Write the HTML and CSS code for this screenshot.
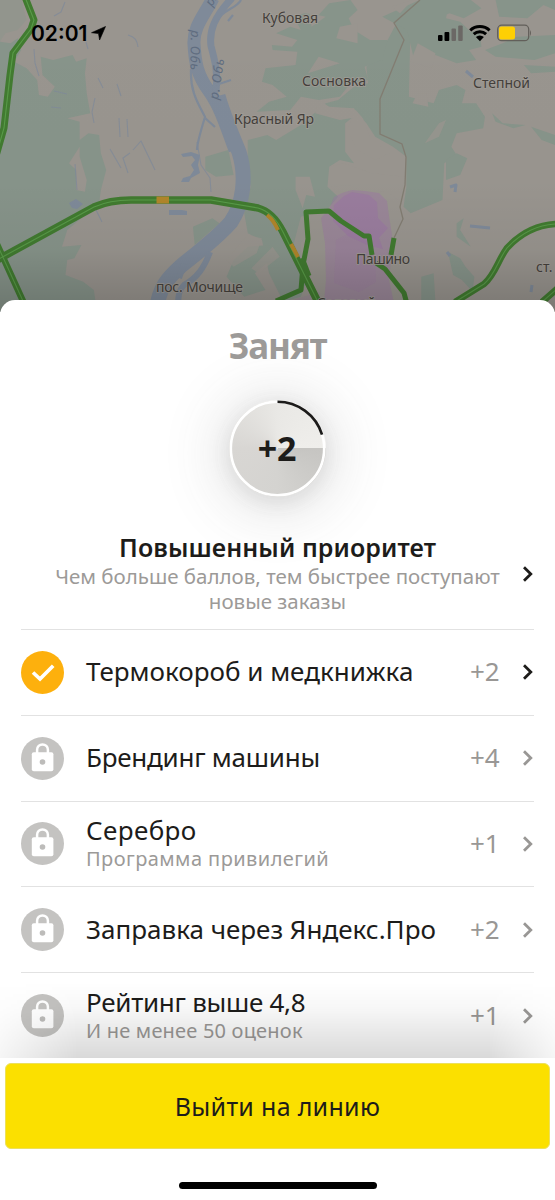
FILE: index.html
```html
<!DOCTYPE html>
<html lang="ru">
<head>
<meta charset="utf-8">
<title>Приоритет</title>
<link rel="stylesheet" href="styles.css">
</head>
<body>
<svg class="symbols" width="0" height="0">
  <symbol id="chevron" viewBox="0 0 12 18"><path d="M2 2.2 8.8 9 2 15.8" fill="none" stroke="currentColor" stroke-width="2.8"/></symbol>
  <symbol id="lock" viewBox="0 0 43 43">
    <circle cx="21.5" cy="21.5" r="21.5" fill="#c4c3c1"/>
    <path d="M16.1 18v-5.2a5.4 5.4 0 0 1 10.8 0V18" fill="none" stroke="#fff" stroke-width="2.5"/>
    <rect x="10.8" y="15.3" width="21.6" height="19" rx="2" fill="#fff"/>
    <circle cx="21.5" cy="25" r="2.8" fill="#bdbcba"/>
  </symbol>
</svg>
<div class="screen">
  <header class="map">
    <svg class="map-canvas" width="555" height="312" viewBox="0 0 555 312">
      <defs><linearGradient id="shade" x1="0" y1="0" x2="0" y2="1"><stop offset="0" stop-color="#000" stop-opacity="0"/><stop offset=".6" stop-color="#000" stop-opacity=".01"/><stop offset=".8" stop-color="#000" stop-opacity=".05"/><stop offset="1" stop-color="#000" stop-opacity=".2"/></linearGradient></defs>
      <rect width="555" height="312" fill="#99958f"/>
      <g fill="#87948a" transform="scale(.354 .3333)">
        <path d="M0 125 30 130 50 115 60 150 40 185 75 205 105 240 110 285 135 290 155 260 120 225 115 170 150 180 205 165 215 185 245 175 240 220 245 280 255 340 190 355 225 365 225 440 195 490 215 510 215 570 240 575 245 540 225 470 225 420 250 400 280 405 285 460 300 510 285 570 280 610 190 690 175 740 230 735 210 775 190 780 185 825 235 845 265 870 275 940 0 940Z"/>
        <path d="M0 0 60 0 75 60 50 90 15 100 0 125Z" opacity=".35"/>
        <path d="M700 420 755 405 780 420 850 375 920 310 955 300 1000 260 1040 250 1035 200 1080 150 1110 90 1130 50 1160 60 1155 290 1190 300 1225 310 1240 270 1290 255 1315 270 1305 310 1345 310 1370 350 1365 385 1290 400 1275 440 1290 465 1255 490 1250 600 1160 640 1140 620 1148 560 1148 470 1110 440 1060 410 1035 370 1010 340 975 370 975 455 1000 490 960 480 930 500 925 560 955 590 915 640 870 640 875 700 850 730 850 760 870 830 850 890 800 905 760 820 740 720 700 700 690 640 708 560 700 510Z"/>
        <path d="M820 80 850 90 830 50 860 40 900 45 930 10 990 0 1010 30 985 55 1000 90 1045 120 1095 120 1080 180 1030 200 1040 240 990 250 960 290 900 300 850 290 820 330 725 335 760 305 810 290 770 255 740 245 750 205 835 195 840 155 770 150 768 135 825 140 840 120 780 100Z"/>
        <path d="M1080 50 1185 0 1270 0 1260 55 1300 65 1330 95 1355 90 1360 140 1325 150 1345 180 1290 190 1230 165 1170 180 1150 90ZM1225 60 1210 0 1330 0 1360 25 1310 55 1270 40ZM1400 0 1568 0 1568 30 1535 15 1490 55 1410 50ZM1420 130 1460 110 1568 105 1568 160 1510 180 1400 170 1370 150ZM1480 195 1568 200 1568 215 1500 220ZM1500 380 1568 405 1568 435 1530 420ZM1390 340 1420 370 1485 375 1450 385 1400 365Z"/>
        <path d="M1260 480 1290 460 1320 475 1300 525 1260 540ZM1265 755 1300 775 1315 800 1340 830 1335 875 1305 840 1280 825ZM1290 670 1310 655 1300 690 1330 740 1290 710ZM1190 830 1225 820 1230 905 1190 910ZM580 470 645 450 660 525 610 530 580 510ZM545 680 600 655 620 670 550 735ZM660 780 700 740 760 735 775 770 720 820 750 870 690 890 640 830Z"/>
      </g>
      <g fill="#99958f" transform="scale(.354 .3333)">
        <path d="M835 530 875 530 890 590 865 585 855 625 835 570ZM1005 330 1025 355 1045 410 1100 460 1060 480 1010 450 980 390ZM935 500 970 490 1050 520 1145 530 1125 600 1090 570 1040 590 990 555 935 560ZM900 300 930 320 1000 325 1015 350 960 360 890 340ZM1180 130 1230 160 1220 205 1160 185ZM1180 280 1205 280 1210 320 1165 310ZM1105 20 1120 15 1165 0 1130 40ZM875 40 920 50 880 80ZM960 80 1010 70 1010 130 950 115ZM900 170 960 190 870 220Z"/>
        <path d="M1240 370 1260 360 1240 410 1200 430ZM880 640 870 760 850 780 830 730 850 650ZM700 705 740 715 725 760 660 800 640 780ZM770 740 790 770 730 820 710 805Z" opacity=".75"/>
      </g>
      <g class="water" fill="none" stroke="#7f8a99" stroke-linejoin="round">
        <path stroke-width="13" d="M213 -2C204 16 193 27 194 44 195 62 197 75 209 91 219 105 225 122 235 150"/>
        <path stroke-width="7" d="M232 -2C214 17 209 31 211 46 215 62 218 70 216 92"/>
        <path stroke-width="15" d="M218 96C223 114 230 130 239 152 247 177 243 204 231 222 217 238 196 254 181 266 169 277 159 286 156 312"/>
        <path stroke-width="6" d="M210 252C204 268 197 278 184 285 176 293 180 300 176 312M179 278 184 264"/>
        <path stroke-width="2.2" d="M191 69C190 92 198 103 205 117 201 130 197 143 197 150M205 118 215 127M216 85 231 80M215 22C225 8 236 9 241 0M228 21 233 15"/>
        <path stroke-width="1.1" opacity=".75" d="M54 16 61 12 65 2M128 35C135 37 137 40 138 47M34 49 35 63 39 76M98 78 103 88M117 84 121 96M95 98 92 112 94 123M119 118 120 137M127 119 128 137M133 150 141 141 155 170M54 91 67 94M51 107 61 108M86 42 88 49M75 164 77 190M110 149 121 168M128 173 123 158 130 153M96 210 102 222M197 142 201 165 210 178 211 192"/>
        <path fill="#7f8a99" stroke="none" d="m181 154 10-2 9 3-2 10 2 8-9 5-2 4-8 0 2-4 7-2 4-6-3-5 4-5-3-4-9 1ZM169 210h13l5 1v4h-18ZM69 203l7-4 7 5-6 5-5-1Z"/>
        <path stroke-width="3" d="M466 71 473 77M470 226 490 228M450 187 456 185 455 192M447 252 450 256M532 285 531 292"/>
      </g>
      <g fill="#9a74a4">
        <path opacity=".4" d="M321 218 330 207 334 197 342 193 352 190 365 191 379 193 387 201 389 216 392 235 391 261 389 280 396 312 323 312 326 280 325 243Z"/>
        <path opacity=".5" d="M334 205 344 196 352 192 369 195 377 202 378 218 388 228 379 238 383 249 370 246 348 236 333 221Z"/>
        <path opacity=".2" d="M336 240 356 230 375 254 376 282 359 292 334 283ZM285 302 320 292 320 312 285 312Z"/>
      </g>
      <path d="M420 0 394 23 404 40 380 99 380 134 402 144 406 157 405 185 400 207 403 219 394 238" fill="none" stroke="#827d72" stroke-width="1.3"/>
      <g class="roads" fill="none" stroke="#417b30" stroke-linejoin="round">
        <path stroke-width="7" d="M25 -3 34 20 31 29 13 53 10 75 4 128-4 156"/>
        <path stroke-width="7.5" d="M-3 260 94 207C105 202 117 200 131 200L211 200 258 208C269 211 277 220 283 232L319 304"/>
        <path stroke-width="6.5" d="M-4 242 28 312M455 302 484 284C495 275 498 260 507 248 520 234 536 225 556 224M542 302 558 288"/>
        <path stroke-width="5" d="M276 301 301 290 303 265 308 239 306 212 329 211 341 221 364 236 369 236 372 255M376 263 385 269 404 293 407 304M391 255 394 238M302 258 309 276"/>
      </g>
      <path d="M25 -3 34 20 31 29 13 53 10 75 4 128-4 156M-3 260 94 207C105 202 117 200 131 200L211 200 258 208C269 211 277 220 283 232L319 304M-4 242 28 312M455 302 484 284C495 275 498 260 507 248 520 234 536 225 556 224M542 302 558 288" fill="none" stroke="#599b49" stroke-width="1.1"/>
      <path d="M156.5 200H169" fill="none" stroke="#b1862a" stroke-width="7"/>
      <path d="M267 215C271 218 275 223 278 230M291 244 298 257" fill="none" stroke="#b1862a" stroke-width="4"/>
      <g class="river-names"><text transform="translate(191 30) rotate(91)" textLength="40">р. Обь</text><text transform="translate(218 100) rotate(-81)" textLength="41">р. Обь</text><text transform="translate(212 7) rotate(-60)">р. Обь</text></g>
      <g class="places">
        <text x="262" y="23" textLength="56">Кубовая</text><text x="302" y="86" textLength="64">Сосновка</text>
        <text x="473" y="88" textLength="57">Степной</text><text x="234" y="124" textLength="80">Красный Яр</text>
        <text x="356" y="264" textLength="54">Пашино</text><text x="156" y="292" textLength="87">пос. Мочище</text>
        <text x="536" y="272">ст.</text><text x="317" y="308" textLength="59">Садовый</text>
      </g>
      <rect width="555" height="312" fill="url(#shade)"/>
    </svg>
    <div class="status">
      <span class="time">02:01</span>
      <svg class="location" width="15" height="15" viewBox="0 0 15 15"><path d="M14.5.5 8.6 14 7.5 7.6.5 6.7Z" stroke="#000" stroke-width=".6"/></svg>
      <svg class="indicators" width="94" height="20" viewBox="0 0 94 20">
        <rect x="1" y="12" width="4.5" height="6" rx="1"/><rect x="7.5" y="9" width="4.8" height="9" rx="1"/>
        <g fill="#6b6865"><rect x="14.5" y="5.5" width="4.5" height="12.5" rx="1"/><rect x="21.2" y="2.5" width="4.5" height="15.5" rx="1"/></g>
        <g fill="none" stroke="#000" stroke-width="3"><path d="M33.2 7.3a14.5 14.5 0 0 1 19.4 0M36.7 11.1a9.2 9.2 0 0 1 12.4 0"/></g>
        <path d="M38.9 14.1a6 6 0 0 1 8 0L42.9 18.2Z"/>
        <rect x="60.7" y="2.2" width="31" height="15.5" rx="4" fill="none" stroke="#625f5a" stroke-width="1.3"/>
        <rect x="62" y="3.5" width="16" height="13" rx="2.5" fill="#fecf04"/><path d="M93 7q2 3 0 6Z" fill="#625f5a"/>
      </svg>
    </div>
  </header>
  <main class="sheet">
    <h1>Занят</h1>
    <div class="score">
      <svg class="ring" width="97" height="97" viewBox="0 0 98 98">
        <circle cx="49" cy="49" r="47.2"/><path d="M49 1.8A47.2 47.2 0 0 1 94 35"/>
      </svg>
      <span>+2</span>
    </div>
    <section class="priority">
      <div class="priority-text"><h2>Повышенный приоритет</h2><p>Чем больше баллов, тем быстрее поступают<br>новые заказы</p></div>
      <svg class="chevron"><use href="#chevron"/></svg>
    </section>
    <ul class="list">
      <li><svg class="badge" viewBox="0 0 43 43"><circle cx="21.5" cy="21.5" r="21.5" fill="#fdb00d"/><path d="M12 21.5 19 28 32.2 14.8" fill="none" stroke="#fff" stroke-width="3.7"/></svg><div class="label"><b class="t1">Термокороб и медкнижка</b></div><span class="points">+2</span><svg class="chevron"><use href="#chevron"/></svg></li>
      <li class="locked"><svg class="badge"><use href="#lock"/></svg><div class="label"><b class="t2">Брендинг машины</b></div><span class="points">+4</span><svg class="chevron"><use href="#chevron"/></svg></li>
      <li class="locked"><svg class="badge"><use href="#lock"/></svg><div class="label double"><b class="t3">Серебро</b><small class="s3">Программа привилегий</small></div><span class="points">+1</span><svg class="chevron"><use href="#chevron"/></svg></li>
      <li class="locked"><svg class="badge"><use href="#lock"/></svg><div class="label"><b class="t4">Заправка через Яндекс.Про</b></div><span class="points">+2</span><svg class="chevron"><use href="#chevron"/></svg></li>
      <li class="locked"><svg class="badge"><use href="#lock"/></svg><div class="label double"><b class="t5">Рейтинг выше 4,8</b><small class="s5">И не менее 50 оценок</small></div><span class="points">+1</span><svg class="chevron"><use href="#chevron"/></svg></li>
    </ul>
  </main>
  <footer class="footer"><button>Выйти на линию</button><div class="home"></div></footer>
</div>
</body>
</html>
```
FILE: styles.css
```css
* { box-sizing: border-box; }
body { margin: 0; background: #fff; font-family: "Noto Sans", sans-serif; color: #1d1c1a; }
h1, h2, p, ul { margin: 0; padding: 0; }
.symbols { position: absolute; }
.screen { width: 555px; height: 1200px; overflow: hidden; display: flex; flex-direction: column; }
.map { position: relative; height: 300px; flex: none; }
.map-canvas { display: block; }
.places { font-size: 14px; fill: #443f3b; stroke: #a19d97; stroke-width: 1.5px; paint-order: stroke; }
.river-names { font-size: 13px; fill: #606d80; font-style: italic; }
.status { position: absolute; inset: 22px 24px auto 31px; height: 22px; display: flex; align-items: center; }
.time { padding-top: 1px; font: 600 21px/22px Inter, sans-serif; color: #000; }
.location { margin-left: 4px; }
.indicators { margin-left: auto; }
.sheet { position: relative; height: 758px; flex: none; padding: 0 21px; background: #fff; border-radius: 15px 15px 0 0; display: flex; flex-direction: column; align-items: center; overflow: hidden; }
h1 { margin-top: 21px; height: 49px; font-size: 35px; line-height: 49px; font-weight: 700; color: #9c9a98; letter-spacing: -1.2px; position: relative; z-index: 1; }
.score { position: relative; width: 97px; height: 97px; margin: 30px 1px 1px 0; border-radius: 50%; display: grid; place-items: center; background: conic-gradient(from 0deg, #e9e8e5 0deg, #efeeeb 90deg, #c6c5c2 90deg, #d4d3d0 180deg, #d8d6d3 270deg, #e9e8e5 360deg); box-shadow: 0 5px 60px 8px rgba(80,80,80,.18), 0 5px 20px rgba(80,80,80,.12); }
.ring { position: absolute; inset: 0; fill: none; stroke-width: 2.7px; }
.ring circle { stroke: #fff; }
.ring path { stroke: #1c1b1a; }
.score span { position: relative; padding-bottom: 2px; font-size: 34px; line-height: 40px; font-weight: 700; letter-spacing: -.3px; }
.priority { width: 100%; height: 131px; padding-top: 33px; display: flex; align-items: flex-start; flex: none; }
.priority-text { width: 513px; text-align: center; white-space: nowrap; }
h2 { font-size: 25px; line-height: 33px; font-weight: 600; letter-spacing: .08px; }
.priority p { font-size: 20.5px; line-height: 25px; color: #9c9a98; }
.chevron { width: 12px; height: 18px; flex: none; color: #1d1c1a; }
.priority .chevron { margin: 34px 0 0 -12px; }
.list { width: 513px; list-style: none; }
li { height: 85.8px; border-top: 1px solid #e2e2e2; display: flex; align-items: center; }
.badge { width: 43px; height: 43px; flex: none; margin-right: 22px; }
.label { display: flex; flex-direction: column; white-space: nowrap; margin-top: -2px; }
.label.double { margin-top: 0; }
.label b { font-weight: 400; font-size: 26px; line-height: 30px; }
.label .t2 { letter-spacing: -.25px; }
.label .t3 { letter-spacing: .4px; }
.label .t5 { letter-spacing: -.27px; }
.label small { font-size: 20px; line-height: 28px; color: #9c9a98; }
.label .s3 { letter-spacing: .43px; }
.label .s5 { letter-spacing: .2px; }
.points { margin-left: auto; margin-top: -2px; font-size: 26px; color: #999795; width: 52px; }
.locked .chevron { color: #999795; }
.sheet::after { content: ""; position: absolute; inset: auto 0 0; height: 76px; background: linear-gradient(#0000, rgba(0,0,0,.03) 35%, rgba(0,0,0,.15)); -webkit-mask-image: linear-gradient(90deg, rgba(0,0,0,.25), #000 14%, #000 88%, rgba(0,0,0,.25)); mask-image: linear-gradient(90deg, rgba(0,0,0,.25), #000 14%, #000 88%, rgba(0,0,0,.25)); }
.footer { flex: 1; padding: 5px 5px 0; display: flex; flex-direction: column; align-items: center; background: #fff; }
button { width: 545px; height: 86px; padding: 0 0 1px; border: 1px solid #ece05c; border-radius: 6px; background: #fbe000; color: #1d1c1a; font: 400 25px/34px "Noto Sans", sans-serif; letter-spacing: .3px; }
.home { width: 198px; height: 7px; margin: 33px 0 0 0; border-radius: 4px; background: #000; }
```
